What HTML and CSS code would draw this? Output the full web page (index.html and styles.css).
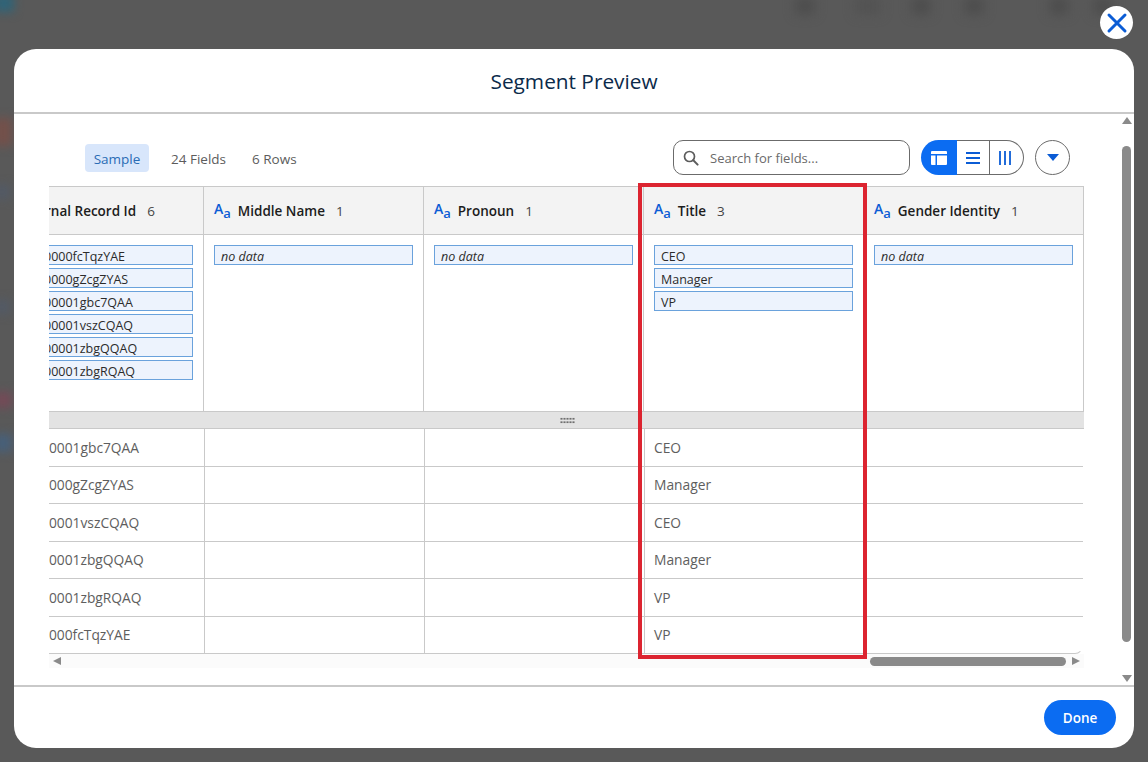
FILE: index.html
```html
<!DOCTYPE html>
<html lang="en">
<head>
    <meta charset="UTF-8">
    <title>Segment Preview</title>
    <link rel="stylesheet" href="styles.css">
</head>
<body>
    <div class="backdrop">
        <span class="blob blob-teal"></span>
        <span class="blob blob-orange"></span>
        <span class="blob blob-blue"></span>
        <span class="blob blob-slate"></span>
        <span class="blob blob-red"></span>
        <span class="blob blob-sky"></span>
        <span class="blob spot spot-1"></span>
        <span class="blob spot spot-2"></span>
        <span class="blob spot spot-3"></span>
        <span class="blob spot spot-4"></span>
        <span class="blob spot spot-5"></span>
        <span class="blob spot spot-6"></span>
    </div>

    <button class="close-button" aria-label="Close">
        <svg width="22" height="22" viewBox="0 0 22 22"><path d="M3 3L19 19M19 3L3 19" stroke="#0b5cd5" stroke-width="3" stroke-linecap="round"/></svg>
    </button>

    <div class="modal">
        <div class="modal-header">Segment Preview</div>

        <div class="modal-body">
            <div class="content">
                <div class="toolbar">
                    <div class="stats">
                        <span class="stat-active">Sample</span>
                        <span class="stat">24 Fields</span>
                        <span class="stat stat-rows">6 Rows</span>
                    </div>
                    <div class="tools">
                        <div class="search">
                            <svg width="16" height="16" viewBox="0 0 16 16"><circle cx="6.5" cy="6.5" r="5" fill="none" stroke="#5c5c5c" stroke-width="1.7"/><path d="M10.3 10.3L14.6 14.6" stroke="#5c5c5c" stroke-width="2" stroke-linecap="round"/></svg>
                            <span>Search for fields...</span>
                        </div>
                        <div class="view-group">
                            <span class="view-btn view-active">
                                <svg width="16" height="14" viewBox="0 0 16 14"><path d="M1 0h14a1 1 0 0 1 1 1v2H0V1a1 1 0 0 1 1-1zM0 4.5h4.5V14H1a1 1 0 0 1-1-1zM6 4.5h10V13a1 1 0 0 1-1 1H6z" fill="#fff"/></svg>
                            </span>
                            <span class="view-btn view-mid">
                                <svg width="14" height="12" viewBox="0 0 14 12"><path d="M0 1h14M0 6h14M0 11h14" stroke="#0b5cd5" stroke-width="1.8"/></svg>
                            </span>
                            <span class="view-btn view-last">
                                <svg width="12" height="14" viewBox="0 0 12 14"><path d="M1 0v14M6 0v14M11 0v14" stroke="#0b5cd5" stroke-width="1.8"/></svg>
                            </span>
                        </div>
                        <span class="menu-btn">
                            <svg width="12" height="7" viewBox="0 0 12 7"><path d="M0 0h12L6 7z" fill="#0b5cd5"/></svg>
                        </span>
                    </div>
                </div>

                <div class="grid-clip">
                    <div class="grid">
                        <div class="head-row">
                            <div class="head-cell col-first"><span class="head-name">rnal Record Id</span><span>6</span></div>
                            <div class="head-cell col"><span class="aa">A<sub>a</sub></span><span class="head-name">Middle Name</span><span>1</span></div>
                            <div class="head-cell col"><span class="aa">A<sub>a</sub></span><span class="head-name">Pronoun</span><span>1</span></div>
                            <div class="head-cell col"><span class="aa">A<sub>a</sub></span><span class="head-name">Title</span><span>3</span></div>
                            <div class="head-cell col"><span class="aa">A<sub>a</sub></span><span class="head-name">Gender Identity</span><span>1</span></div>
                        </div>
                        <div class="values-row">
                            <div class="values-cell col-first">
                                <div class="chip">0000fcTqzYAE</div>
                                <div class="chip">0000gZcgZYAS</div>
                                <div class="chip">00001gbc7QAA</div>
                                <div class="chip">00001vszCQAQ</div>
                                <div class="chip">00001zbgQQAQ</div>
                                <div class="chip">00001zbgRQAQ</div>
                            </div>
                            <div class="values-cell col"><div class="chip chip-empty">no data</div></div>
                            <div class="values-cell col"><div class="chip chip-empty">no data</div></div>
                            <div class="values-cell col">
                                <div class="chip">CEO</div>
                                <div class="chip">Manager</div>
                                <div class="chip">VP</div>
                            </div>
                            <div class="values-cell col"><div class="chip chip-empty">no data</div></div>
                        </div>
                        <div class="splitter"><span class="grip"></span></div>
                        <div class="data-rows">
                            <div class="data-row"><div class="data-cell data-first">00001gbc7QAA</div><div class="data-cell"></div><div class="data-cell"></div><div class="data-cell">CEO</div><div class="data-cell"></div></div>
                            <div class="data-row"><div class="data-cell data-first">0000gZcgZYAS</div><div class="data-cell"></div><div class="data-cell"></div><div class="data-cell">Manager</div><div class="data-cell"></div></div>
                            <div class="data-row"><div class="data-cell data-first">00001vszCQAQ</div><div class="data-cell"></div><div class="data-cell"></div><div class="data-cell">CEO</div><div class="data-cell"></div></div>
                            <div class="data-row"><div class="data-cell data-first">00001zbgQQAQ</div><div class="data-cell"></div><div class="data-cell"></div><div class="data-cell">Manager</div><div class="data-cell"></div></div>
                            <div class="data-row"><div class="data-cell data-first">00001zbgRQAQ</div><div class="data-cell"></div><div class="data-cell"></div><div class="data-cell">VP</div><div class="data-cell"></div></div>
                            <div class="data-row"><div class="data-cell data-first">0000fcTqzYAE</div><div class="data-cell"></div><div class="data-cell"></div><div class="data-cell">VP</div><div class="data-cell"></div></div>
                        </div>
                    </div>
                    <div class="highlight"></div>
                </div>
                <div class="h-scroll">
                    <span class="arrow-left"></span>
                    <span class="h-thumb"></span>
                    <span class="arrow-right"></span>
                </div>
            </div>

            <div class="v-scroll">
                <span class="arrow-up"></span>
                <span class="v-thumb"></span>
                <span class="arrow-down"></span>
            </div>
        </div>

        <div class="modal-footer">
            <button class="done-button">Done</button>
        </div>
    </div>
</body>
</html>
```

FILE: styles.css
```css
* { box-sizing: border-box; }
html, body { margin: 0; height: 100%; }
body { background: #595959; font-family: "Open Sans", "Noto Sans", sans-serif; overflow: hidden; padding: 49px 14px 14px; }

.backdrop { position: absolute; inset: 0; overflow: hidden; }
.blob { position: absolute; filter: blur(5px); }
.blob-teal { left: -6px; top: -6px; width: 20px; height: 18px; background: #2f6478; }
.blob-orange { left: -6px; top: 118px; width: 18px; height: 28px; background: #74504a; }
.blob-blue { left: -6px; top: 185px; width: 16px; height: 14px; background: #525a66; }
.blob-slate { left: -6px; top: 300px; width: 16px; height: 14px; background: #525a66; }
.blob-red { left: -6px; top: 392px; width: 18px; height: 16px; background: #744a57; }
.blob-sky { left: -6px; top: 434px; width: 18px; height: 18px; background: #47607a; }
.spot { top: -2px; width: 18px; height: 16px; background: #4c4c4c; filter: blur(6px); }
.spot-1 { left: 796px; }
.spot-2 { left: 856px; width: 24px; background: #525252; }
.spot-3 { left: 912px; }
.spot-4 { left: 965px; }
.spot-5 { left: 1050px; }
.spot-6 { left: 1094px; }

.close-button { position: absolute; left: 1100px; top: 6px; width: 33px; height: 33px; border: none; border-radius: 50%; background: #fff; padding: 0; display: flex; align-items: center; justify-content: center; }

.modal { position: relative; height: 699px; background: #fff; border-radius: 22px; display: flex; flex-direction: column; }
.modal-header { height: 65px; flex: none; border-bottom: 2px solid #c9c9c9; display: flex; align-items: center; justify-content: center; font-size: 20.8px; color: #0b2a4a; }

.modal-body { flex: 1; display: flex; justify-content: space-between; min-height: 0; padding: 0 0 0 35px; }
.content { width: 1035px; padding-top: 26px; }

.toolbar { margin-left: 36px; width: 985px; height: 35px; display: flex; justify-content: space-between; align-items: center; }
.stats { display: flex; align-items: center; gap: 22px; font-size: 13.5px; color: #5c5c5c; padding-top: 1px; }
.stat { padding-top: 2px; }
.stat-active { background: #d8e6fb; color: #2a6cb5; width: 64px; height: 28px; line-height: 30px; text-align: center; border-radius: 4px; }
.stat-rows { margin-left: 4px; }
.tools { display: flex; align-items: center; }

.search { width: 237px; height: 35px; border: 1px solid #6b6b6b; border-radius: 10px; display: flex; align-items: center; gap: 11px; padding-left: 9px; font-size: 13px; color: #6a6a6a; }
.view-group { width: 103px; height: 35px; margin-left: 11px; display: flex; }
.view-btn { display: flex; align-items: center; justify-content: center; border: 1px solid #6b6b6b; border-left: none; }
.view-active { width: 36px; background: #0b6cf2; border: none; border-radius: 18px 0 0 18px; }
.view-mid { width: 33px; }
.view-last { flex: 1; border-radius: 0 18px 18px 0; padding-right: 3px; }
.menu-btn { width: 35px; height: 35px; margin-left: 11px; border: 1px solid #6b6b6b; border-radius: 50%; display: flex; align-items: center; justify-content: center; }

.grid-clip { position: relative; z-index: 1; height: 468px; margin-top: 11px; }
.grid { height: 468px; overflow: hidden; }

.head-row, .values-row, .data-row { display: flex; }
.head-row { height: 49px; background: #f3f3f3; border-top: 1px solid #c9c9c9; border-bottom: 1px solid #c9c9c9; }
.head-cell { display: flex; align-items: center; padding-left: 10px; font-size: 13.5px; color: #444; border-left: 1px solid #c9c9c9; }
.head-name { font-weight: 600; color: #1c1c1c; margin-right: 11px; }
.aa { color: #0b5cd5; font-size: 14px; font-weight: 600; margin-right: 7px; line-height: 1; position: relative; top: -2px; }
.aa sub { font-size: 13px; line-height: 0; vertical-align: -4px; }

.col-first { width: 154px; flex: none; }
.col { width: 220px; flex: none; }
.col:last-child { width: 221px; border-right: 1px solid #c9c9c9; }
.head-cell.col-first { border-left: none; padding-left: 0; white-space: nowrap; }
.head-cell.col-first .head-name { margin-left: -4px; }

.values-row { height: 176px; }
.values-cell { padding: 10px 10px 0; border-left: 1px solid #c9c9c9; display: flex; flex-direction: column; gap: 3px; }
.values-cell.col-first { border-left: none; padding-left: 0; }
.chip { height: 20px; flex: none; background: #edf3fd; border: 1px solid #6aa2dc; padding-left: 6px; font-size: 12.5px; line-height: 22px; color: #2b2b2b; white-space: nowrap; overflow: hidden; }
.col-first .chip { border-left: none; padding-left: 0; text-indent: -5px; }
.chip-empty { font-style: italic; }

.splitter { height: 18px; background: #e3e3e3; border-top: 1px solid #c9c9c9; border-bottom: 1px solid #c9c9c9; display: flex; align-items: center; justify-content: center; }
.grip { width: 15px; height: 7px; margin-left: 1px; background-image: radial-gradient(circle, #6f6f6f 1px, transparent 1.2px); background-size: 3px 3.5px; }

.data-rows { margin-right: 1px; }
.data-row { height: 37.5px; border-bottom: 1px solid #c9c9c9; font-size: 13.8px; color: #5e5e5e; }
.data-row:last-child { border-right: 1px solid transparent; border-bottom-right-radius: 8px; }
.data-cell { width: 220px; flex: none; display: flex; align-items: center; padding-left: 9px; border-left: 1px solid #c9c9c9; white-space: nowrap; }
.data-first { width: 155px; border-left: none; padding-left: 0; text-indent: -8px; }

.highlight { position: absolute; left: 589px; top: -3px; width: 229px; height: 476px; border: 4px solid #dc2430; }

.h-scroll { display: flex; align-items: center; height: 14px; background: #fbfbfb; }
.arrow-left { margin-left: 4px; border-style: solid; border-width: 4.5px 8px 4.5px 0; border-color: transparent #8a8a8a transparent transparent; }
.arrow-right { margin: 0 4px 0 6px; border-style: solid; border-width: 4.5px 0 4.5px 8px; border-color: transparent transparent transparent #8a8a8a; }
.h-thumb { margin-left: auto; width: 196px; height: 9px; background: #8a8a8a; border-radius: 5px; }

.v-scroll { width: 14px; padding: 3px 1px 3px 0; display: flex; flex-direction: column; align-items: center; }
.arrow-up { border-style: solid; border-width: 0 5px 7px 5px; border-color: transparent transparent #8a8a8a transparent; }
.arrow-down { margin-top: auto; border-style: solid; border-width: 7px 5px 0 5px; border-color: #8a8a8a transparent transparent transparent; }
.v-thumb { margin-top: 22px; width: 9px; height: 496px; background: #8a8a8a; border-radius: 5px; }

.modal-footer { height: 63px; flex: none; border-top: 2px solid #c9c9c9; display: flex; align-items: center; justify-content: flex-end; padding-right: 18px; }
.done-button { width: 72px; height: 35px; border: none; border-radius: 18px; background: #0b6cf2; color: #fff; font-family: inherit; font-size: 13.5px; font-weight: 600; }
```
